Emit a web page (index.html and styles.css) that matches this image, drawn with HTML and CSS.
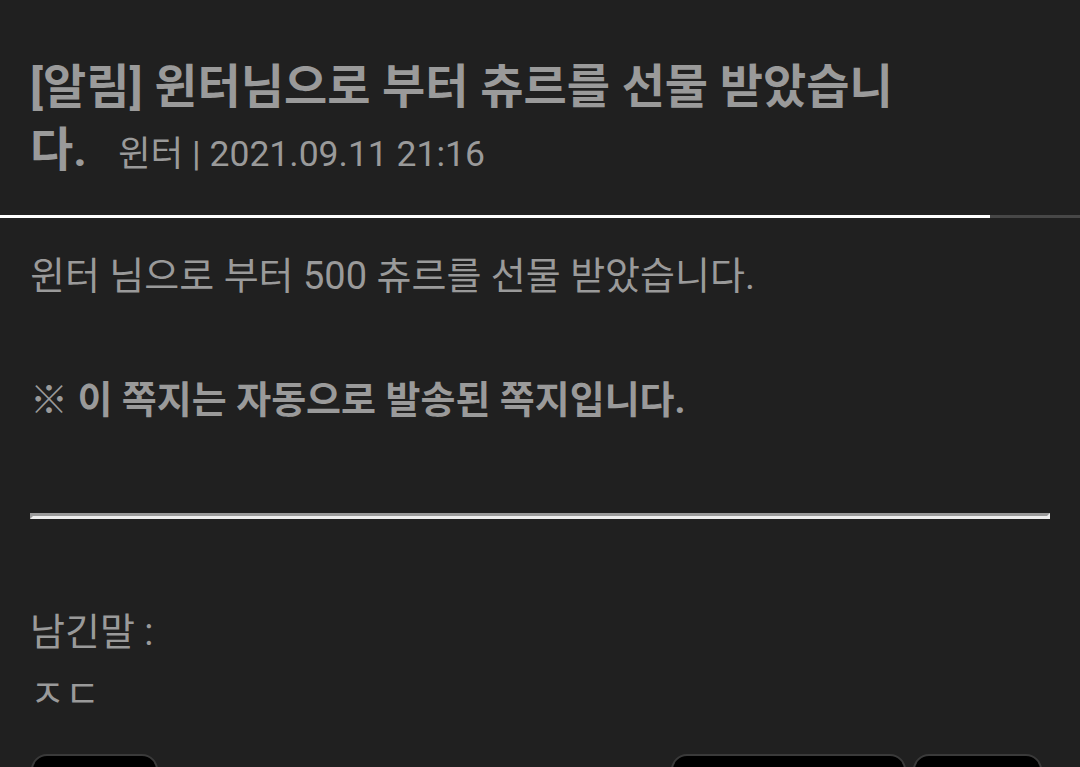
FILE: index.html
```html
<!DOCTYPE html>
<html lang="ko">
<head>
<meta charset="utf-8">
<title>쪽지</title>
<link rel="stylesheet" href="styles.css">
</head>
<body>
<div class="page">
  <header class="head">
    <h1 class="title">[알림] 윈터님으로 부터 츄르를 선물 받았습니다.<span class="meta">윈터 | 2021.09.11 21:16</span></h1>
  </header>
  <div class="tabline"><div class="tabline-active"></div></div>
  <section class="content">
    <p class="msg">윈터 님으로 부터 500 츄르를 선물 받았습니다.<br><br><b>※ 이 쪽지는 자동으로 발송된 쪽지입니다.</b></p>
    <hr class="rule">
    <p class="note">남긴말 :<br>ㅈㄷ</p>
  </section>
  <div class="actions">
    <button class="btn btn-list" type="button"></button>
    <div class="actions-right">
      <button class="btn btn-wide" type="button"></button>
      <button class="btn btn-small" type="button"></button>
    </div>
  </div>
</div>
</body>
</html>
```

FILE: styles.css
```css
html, body {
  margin: 0;
  padding: 0;
  background: #202020;
}
body {
  font-family: Roboto, "Noto Sans CJK KR", sans-serif;
  color: #9a9a9a;
  overflow: hidden;
}
.page {
  width: 1080px;
}
.head {
  padding: 55px 30px 31px 30px;
}
.title {
  margin: 0;
  width: 880px;
  font-size: 47px;
  line-height: 63px;
  font-weight: 700;
  color: #9a9a9a;
}
.meta {
  font-size: 35.5px;
  line-height: 1;
  font-weight: 400;
  margin-left: 31px;
}
.tabline {
  height: 3px;
  background: #474747;
}
.tabline-active {
  width: 990px;
  height: 3px;
  margin-top: 3px;
  background: #ffffff;
}
.content {
  padding: 27px 30px 0 30px;
  font-size: 38px;
  line-height: 62px;
}
.msg {
  margin: 0;
}
.msg b {
  font-weight: 700;
}
.rule {
  margin: 82px 0 0 0;
  height: 0;
  border-style: solid;
  border-width: 3px;
  border-color: #9a9a9a #eeeeee #eeeeee #9a9a9a;
}
.note {
  margin: 82px 0 0 0;
}
.actions {
  display: flex;
  justify-content: space-between;
  padding: 29px 38px 0 31px;
}
.actions-right {
  display: flex;
  gap: 7px;
}
.btn {
  height: 70px;
  background: #000;
  border: 2px solid #3a3a3a;
  border-radius: 16px;
  padding: 0;
}
.btn-list { width: 127px; }
.btn-wide { width: 235px; }
.btn-small { width: 129px; }
```
